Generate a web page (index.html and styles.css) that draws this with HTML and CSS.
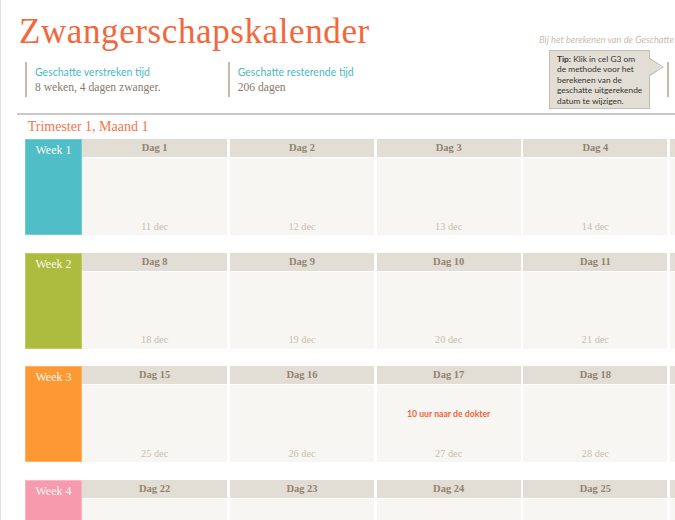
FILE: index.html
```html
<!DOCTYPE html>
<html lang="nl">
<head>
<meta charset="utf-8">
<title>Zwangerschapskalender</title>
<link rel="stylesheet" href="styles.css">
</head>
<body>
<header class="top">
  <h1 class="title">Zwangerschapskalender</h1>
  <span class="note">Bij het berekenen van de Geschatte</span>
</header>
<section class="info">
  <div class="stat stat1">
    <div class="label">Geschatte verstreken tijd</div>
    <div class="value">8 weken, 4 dagen zwanger.</div>
  </div>
  <div class="stat stat2">
    <div class="label">Geschatte resterende tijd</div>
    <div class="value">206 dagen</div>
  </div>
  <div class="stat stat3"></div>
</section>
<div class="tip"><b>Tip:</b> Klik in cel G3 om<br>de methode voor het<br>berekenen van de<br>geschatte uitgerekende<br>datum te wijzigen.</div>
<div class="rule"></div>
<h2 class="trimester">Trimester 1, Maand 1</h2>
<main class="weeks">
  <div class="week-row">
    <div class="week w1">Week 1</div>
    <div class="day"><div class="day-head">Dag 1</div><div class="day-body"><span class="date">11 dec</span></div></div>
    <div class="day"><div class="day-head">Dag 2</div><div class="day-body"><span class="date">12 dec</span></div></div>
    <div class="day"><div class="day-head">Dag 3</div><div class="day-body"><span class="date">13 dec</span></div></div>
    <div class="day"><div class="day-head">Dag 4</div><div class="day-body"><span class="date">14 dec</span></div></div>
    <div class="day"><div class="day-head">Dag 5</div><div class="day-body"><span class="date">15 dec</span></div></div>
  </div>
  <div class="week-row">
    <div class="week w2">Week 2</div>
    <div class="day"><div class="day-head">Dag 8</div><div class="day-body"><span class="date">18 dec</span></div></div>
    <div class="day"><div class="day-head">Dag 9</div><div class="day-body"><span class="date">19 dec</span></div></div>
    <div class="day"><div class="day-head">Dag 10</div><div class="day-body"><span class="date">20 dec</span></div></div>
    <div class="day"><div class="day-head">Dag 11</div><div class="day-body"><span class="date">21 dec</span></div></div>
    <div class="day"><div class="day-head">Dag 12</div><div class="day-body"><span class="date">22 dec</span></div></div>
  </div>
  <div class="week-row">
    <div class="week w3">Week 3</div>
    <div class="day"><div class="day-head">Dag 15</div><div class="day-body"><span class="date">25 dec</span></div></div>
    <div class="day"><div class="day-head">Dag 16</div><div class="day-body"><span class="date">26 dec</span></div></div>
    <div class="day"><div class="day-head">Dag 17</div><div class="day-body"><span class="event">10 uur naar de dokter</span><span class="date">27 dec</span></div></div>
    <div class="day"><div class="day-head">Dag 18</div><div class="day-body"><span class="date">28 dec</span></div></div>
    <div class="day"><div class="day-head">Dag 19</div><div class="day-body"><span class="date">29 dec</span></div></div>
  </div>
  <div class="week-row">
    <div class="week w4">Week 4</div>
    <div class="day"><div class="day-head">Dag 22</div><div class="day-body"><span class="date">1 jan</span></div></div>
    <div class="day"><div class="day-head">Dag 23</div><div class="day-body"><span class="date">2 jan</span></div></div>
    <div class="day"><div class="day-head">Dag 24</div><div class="day-body"><span class="date">3 jan</span></div></div>
    <div class="day"><div class="day-head">Dag 25</div><div class="day-body"><span class="date">4 jan</span></div></div>
    <div class="day"><div class="day-head">Dag 26</div><div class="day-body"><span class="date">5 jan</span></div></div>
  </div>
</main>
</body>
</html>
```
FILE: styles.css
```css
html, body {
  margin: 0;
  padding: 0;
  width: 675px;
  height: 520px;
  overflow: hidden;
  background: #fff;
}
body {
  position: relative;
  box-shadow: inset 1px 0 0 #e3e3e3;
  font-family: "Liberation Serif", "Times New Roman", serif;
}
.top {
  display: flex;
  justify-content: space-between;
  align-items: baseline;
  padding: 12px 1px 0 19px;
}
.title {
  margin: 0;
  font-size: 35px;
  line-height: 40px;
  font-weight: normal;
  letter-spacing: 0.6px;
  color: #f4673b;
  white-space: nowrap;
}
.note {
  font-family: Lato, sans-serif;
  font-style: italic;
  font-size: 9.3px;
  color: #cbbcaa;
  white-space: nowrap;
}
.info {
  display: flex;
  margin-top: 10px;
  padding-left: 25px;
}
.stat {
  flex: none;
  height: 35px;
  box-sizing: border-box;
  border-left: 2px solid #c9baa6;
  padding-left: 8px;
}
.stat1 { width: 202.7px; }
.stat2 { width: 439.3px; }
.stat3 { width: 8px; }
.label {
  padding-top: 3px;
  font-family: Lato, sans-serif;
  font-size: 10.5px;
  line-height: 14px;
  color: #4cb7c4;
  white-space: nowrap;
}
.value {
  padding-top: 1px;
  font-size: 11.6px;
  line-height: 16px;
  color: #877a6a;
  white-space: nowrap;
}
.tip {
  position: absolute;
  left: 549px;
  top: 50px;
  width: 101px;
  height: 59px;
  box-sizing: border-box;
  background: #e3ded5;
  border: 1px solid #c6bdaf;
  padding: 2.5px 2px 0 7px;
  font-family: Lato, sans-serif;
  font-size: 8.4px;
  line-height: 10.5px;
  color: #363430;
  white-space: nowrap;
}
.tip::before {
  content: "";
  position: absolute;
  left: calc(100% + 1px);
  top: 7px;
  border-left: 14px solid #c6bdaf;
  border-top: 9px solid transparent;
  border-bottom: 9px solid transparent;
}
.tip::after {
  content: "";
  position: absolute;
  left: 100%;
  top: 8px;
  border-left: 14px solid #e3ded5;
  border-top: 8px solid transparent;
  border-bottom: 8px solid transparent;
}
.rule {
  margin: 15.5px 0 0 17px;
  height: 2px;
  background: #c9c9c9;
}
.trimester {
  margin: 4px 0 0 27.7px;
  font-size: 14px;
  line-height: 16px;
  font-weight: normal;
  color: #f1764d;
}
.weeks {
  display: flex;
  flex-direction: column;
  gap: 17.6px;
  margin-top: 4.8px;
  padding-left: 25px;
}
.week-row {
  display: flex;
  height: 96px;
  flex: none;
}
.week {
  flex: none;
  width: 57px;
  box-sizing: border-box;
  padding-top: 1px;
  text-align: center;
  font-size: 12px;
  line-height: 18px;
  color: #fbf7ee;
}
.w1 { background: #4fbec6; border: 1px solid #72ccd2; }
.w2 { background: #adbb3f; border: 1px solid #c0cb66; }
.w3 { background: #fe9832; border: 1px solid #ffb263; }
.w4 { background: #f89aae; border: 1px solid #fbb5c3; }
.day {
  flex: none;
  width: 144px;
  margin-left: 2.7px;
  display: flex;
  flex-direction: column;
}
.day:nth-child(2) {
  width: 145.3px;
  margin-left: 0;
}
.day-head {
  height: 18px;
  border-bottom: 1px solid #fff;
  background: #e2ded6;
  text-align: center;
  font-size: 10.5px;
  line-height: 18px;
  font-weight: bold;
  color: #928370;
}
.day-body {
  flex: 1;
  background: #f7f6f3;
  display: flex;
  flex-direction: column;
  align-items: center;
}
.event {
  margin-top: 23px;
  font-family: Lato, sans-serif;
  font-weight: bold;
  font-size: 8.7px;
  line-height: 12px;
  color: #f4643a;
  white-space: nowrap;
}
.date {
  margin-top: auto;
  padding-bottom: 1.6px;
  font-size: 10.3px;
  line-height: 14px;
  color: #c8bdb1;
}
```
